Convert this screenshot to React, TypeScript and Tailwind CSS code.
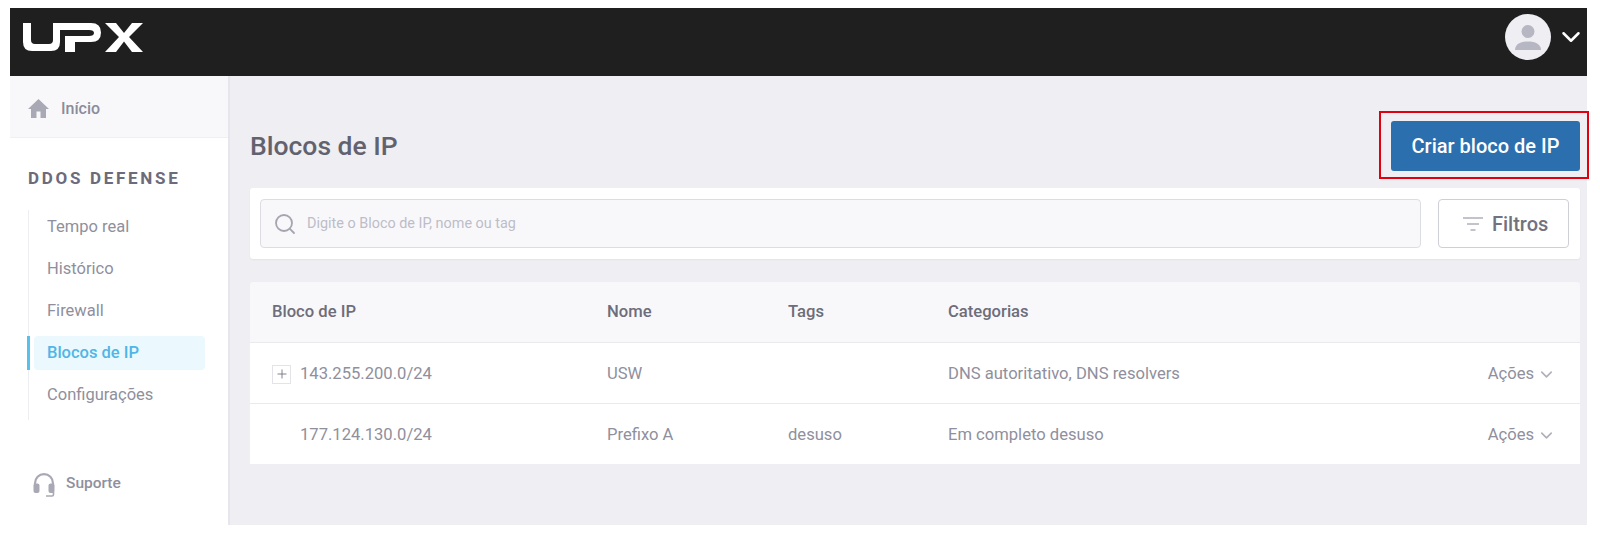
import React from "react";
import { Search, ChevronDown, Plus } from "lucide-react";

const font = { fontFamily: "Roboto, sans-serif" };

function Logo() {
  return (
    <svg width="120" height="31" viewBox="0 0 120 31" fill="#ffffff">
      <path d="M0 1H8V18Q8 22 12 22H26Q30 22 30 18V1H68Q78 1 78 10.5Q78 20 68 20H52V30H42V14H66Q71 14 71 11Q71 8 66 8H37V20Q37 29 28 29H9Q0 29 0 20Z" />
      <path d="M82 1H93L101 11L109 1H120L106 15L120 30H109L101 19.5L93 30H82L96 15Z" />
    </svg>
  );
}

function Home() {
  return (
    <svg width="21" height="19" viewBox="0 0 21 19" fill="#a9a9b5">
      <path d="M10.5 0L0 10H3V19H8.5V12.5H12.5V19H18V10H21Z" />
    </svg>
  );
}

function Headset() {
  return (
    <svg width="22" height="24" viewBox="0 0 22 24" fill="none">
      <path d="M2 14V10.5C2 5 6 1.2 11 1.2C16 1.2 20 5 20 10.5V14" stroke="#a9a9b5" strokeWidth="2.2" />
      <rect x="0.5" y="10.5" width="6" height="9.5" rx="2" fill="#a9a9b5" />
      <rect x="15.5" y="10.5" width="6" height="9.5" rx="2" fill="#a9a9b5" />
      <path d="M20.5 19V21.5C20.5 22.5 20 23 19 23H13" stroke="#a9a9b5" strokeWidth="1.6" />
    </svg>
  );
}

function Avatar() {
  return (
    <div className="w-[46px] h-[46px] rounded-full bg-[#eeeef3] flex items-center justify-center">
      <svg width="28" height="30" viewBox="0 0 28 30" fill="#b7b7c4">
        <circle cx="14" cy="9.5" r="6.5" />
        <path d="M1 28C1 22 7 19.5 14 19.5C21 19.5 27 22 27 28Z" />
      </svg>
    </div>
  );
}

function FilterIcon() {
  return (
    <svg width="20" height="14" viewBox="0 0 20 14" stroke="#b0b0bc" strokeWidth="1.3" fill="none">
      <path d="M0 1H20M4 7H16M7.5 13H12.5" />
    </svg>
  );
}

const nav = ["Tempo real", "Histórico", "Firewall", "Blocos de IP", "Configurações"];

const rows = [
  { ip: "143.255.200.0/24", name: "USW", tags: "", cat: "DNS autoritativo, DNS resolvers", expand: true },
  { ip: "177.124.130.0/24", name: "Prefixo A", tags: "desuso", cat: "Em completo desuso", expand: false },
];

export default function App() {
  return (
    <div style={font} className="h-[539px] bg-white pt-2 pl-[10px] pr-[13px] pb-[14px] flex flex-col overflow-hidden">
      <header className="h-[68px] shrink-0 bg-[#201f20] flex items-center justify-between pl-[13px] pr-[1px] pb-[10px]">
        <Logo />
        <div className="flex items-center gap-[5px]">
          <Avatar />
          <ChevronDown size={30} color="#ffffff" strokeWidth={2} />
        </div>
      </header>
      <div className="flex flex-1 min-h-0">
        <aside className="w-[220px] shrink-0 bg-white flex flex-col border-r-2 border-[#e6e6ec]">
          <div className="h-[62px] shrink-0 bg-[#f8f8fa] border-b border-[#f0f0f4] flex items-center pl-[18px] pt-[4px] gap-[12px]">
            <Home />
            <span className="text-[16px] font-medium text-[#8b8b9a]">Início</span>
          </div>
          <div className="pl-[18px] pt-[30px] text-[17px] leading-[20px] font-bold tracking-[2.7px] text-[#6b6b7b] whitespace-nowrap">
            DDOS DEFENSE
          </div>
          <nav className="ml-[18px] mt-[22px] border-l border-[#eeeef2] w-[180px] h-[210px]">
            <div className="-mt-[4px]">
              {nav.map((n) => {
                const active = n === "Blocos de IP";
                return (
                  <div key={n} className="h-[42px] flex items-center relative">
                    {active ? (
                      <>
                        <span className="absolute left-[-2px] top-[4px] w-[3px] h-[34px] bg-[#55c1ec]" />
                        <span className="ml-[5px] w-[171px] h-[34px] rounded-[4px] bg-[#ebf8fe] flex items-center pl-[13px] text-[16.5px] font-medium text-[#4fb6e6]">
                          {n}
                        </span>
                      </>
                    ) : (
                      <span className="pl-[18px] text-[16.5px] text-[#8f8f9d]">{n}</span>
                    )}
                  </div>
                );
              })}
            </div>
          </nav>
          <div className="mt-[53px] ml-[23px] flex items-center gap-[11px]">
            <Headset />
            <span className="text-[15.5px] font-medium text-[#8f8f9d] -mt-[2px]">Suporte</span>
          </div>
        </aside>
        <main className="flex-1 min-w-0 bg-[#eeeef3] pl-[20px] pr-[7px]">
          <div className="flex items-start justify-between h-[112px] pt-[35px]">
            <h1 className="mt-[20px] text-[26.5px] leading-[30px] font-medium text-[#62626f]">Blocos de IP</h1>
            <div className="border-2 border-[#e0000f] -mr-[9px] pt-[8px] pb-[6px] pl-[10px] pr-[7px]">
              <button className="w-[189px] h-[50px] bg-[#2b6fae] rounded-[3px] text-white text-[20px] font-medium">
                Criar bloco de IP
              </button>
            </div>
          </div>
          <section className="bg-white rounded-[3px] h-[71px] shadow-[0_1px_2px_rgba(0,0,0,0.05)] flex items-center pl-[10px] pr-[11px]">
            <div className="flex-1 h-[49px] bg-[#f8f8fb] border border-[#dcdce3] rounded-[4px] flex items-center pl-[12px] gap-[10px]">
              <Search size={24} color="#a5a5b2" strokeWidth={1.8} />
              <span className="text-[14.4px] text-[#bdbdc8]">Digite o Bloco de IP, nome ou tag</span>
            </div>
            <button className="ml-[17px] w-[131px] h-[49px] bg-white border border-[#cfcfd6] rounded-[4px] flex items-center pl-[24px] gap-[9px] text-[20px] font-medium text-[#72727f]">
              <FilterIcon />
              Filtros
            </button>
          </section>
          <section className="mt-[23px] rounded-t-[3px] overflow-hidden">
            <div className="grid grid-cols-[335px_181px_160px_1fr] h-[61px] bg-[#f8f8fa] border-b border-[#e9e9ee] items-center px-[22px] text-[16.6px] font-medium text-[#6d6d7b]">
              <span>Bloco de IP</span>
              <span>Nome</span>
              <span>Tags</span>
              <span>Categorias</span>
            </div>
            {rows.map((r, i) => (
              <div
                key={r.ip}
                className={`grid grid-cols-[335px_181px_160px_1fr_auto] h-[60.5px] bg-white items-center pl-[22px] pr-[24px] pt-[3px] text-[16.6px] text-[#8f8f9d] ${
                  i === 0 ? "border-b border-[#e9e9ee]" : ""
                }`}
              >
                <span className="flex items-center">
                  {r.expand ? (
                    <span className="w-[19px] h-[19px] border border-[#e3e3e9] flex items-center justify-center mr-[9px]">
                      <Plus size={14} color="#777785" strokeWidth={1.6} />
                    </span>
                  ) : (
                    <span className="w-[28px]" />
                  )}
                  {r.ip}
                </span>
                <span>{r.name}</span>
                <span>{r.tags}</span>
                <span>{r.cat}</span>
                <span className="flex items-center gap-[3px]">
                  Ações
                  <ChevronDown size={19} color="#b0b0bc" strokeWidth={2} />
                </span>
              </div>
            ))}
          </section>
        </main>
      </div>
    </div>
  );
}
